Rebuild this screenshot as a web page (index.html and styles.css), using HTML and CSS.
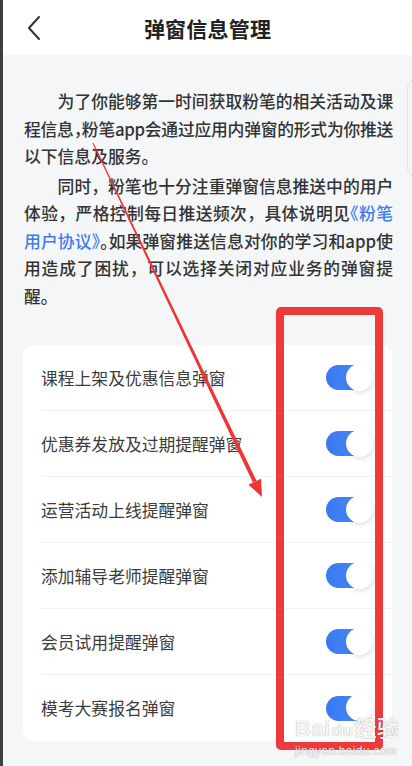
FILE: index.html
```html
<!DOCTYPE html>
<html lang="zh-CN">

<head>
    <meta charset="UTF-8">
    <meta name="viewport" content="width=device-width, initial-scale=1.0">
    <title>弹窗信息管理</title>
    <link rel="stylesheet" href="styles.css">
</head>

<body>

    <!-- Top bar -->
    <header class="topbar">
        <a class="back" href="#">
            <svg width="14" height="26" viewBox="0 0 14 26">
                <polyline points="12,2 2,13 12,24" fill="none" stroke="#333" stroke-width="2" stroke-linecap="round" stroke-linejoin="round" />
            </svg>
        </a>
        <h1>弹窗信息管理</h1>
        <span></span>
    </header>

    <!-- Intro text -->
    <section class="intro">
        <p>
            <span class="ln first">为了你能够第一时间获取粉笔的相关活动及课</span>
            <span class="ln tight">程信息<span class="half">，</span>粉笔app会通过应用内弹窗的形式为你推送</span>
            <span class="end">以下信息及服务。</span>
        </p>
        <p>
            <span class="ln first">同时，粉笔也十分注重弹窗信息推送中的用户</span>
            <span class="ln">体验，严格控制每日推送频次，具体说明见<a href="#"><span class="half">《</span>粉笔</a></span>
            <span class="ln"><a href="#">用户协议<span class="half">》</span></a><span class="half">。</span>如果弹窗推送信息对你的学习和app使</span>
            <span class="ln">用造成了困扰，可以选择关闭对应业务的弹窗提</span>
            <span class="end">醒。</span>
        </p>
    </section>

    <!-- Switch list -->
    <ul class="card">
        <li class="row"><span>课程上架及优惠信息弹窗</span><span class="switch on"><i></i></span></li>
        <li class="row"><span>优惠券发放及过期提醒弹窗</span><span class="switch on"><i></i></span></li>
        <li class="row"><span>运营活动上线提醒弹窗</span><span class="switch on"><i></i></span></li>
        <li class="row"><span>添加辅导老师提醒弹窗</span><span class="switch on"><i></i></span></li>
        <li class="row"><span>会员试用提醒弹窗</span><span class="switch on"><i></i></span></li>
        <li class="row"><span>模考大赛报名弹窗</span><span class="switch on"><i></i></span></li>
    </ul>

    <!-- Floating side tab -->
    <div class="side-tab"></div>

    <!-- Annotation: red frame and arrow -->
    <div class="mark-box"></div>
    <svg class="mark-arrow" width="412" height="766" viewBox="0 0 412 766">
        <polygon points="93.5,142.7 92.5,143.3 252.9,482.6 256.5,480.8" fill="#ee3535" />
        <polygon points="262,497 261,478.7 248.4,484.7" fill="#ee3535" />
    </svg>

    <!-- Watermark -->
    <div class="watermark">
        <div class="wm-logo">Bai<span>du</span>经验</div>
        <div class="wm-url">jingyan.baidu.com</div>
    </div>

</body>

</html>
```

FILE: styles.css
```css
/* Page */
html,
body {
    margin: 0;
    padding: 0;
}

body {
    position: relative;
    min-height: 766px;
    box-sizing: border-box;
    border-left: 3px solid #3e3e3e;
    background: #f5f6f8;
    font-family: "Noto Sans CJK SC", "Noto Sans", sans-serif;
    color: #333;
    overflow: hidden;
}

/* Top bar */
.topbar {
    height: 55px;
    background: #fff;
    display: grid;
    grid-template-columns: 60px 1fr 60px;
    align-items: center;
}

.back {
    display: flex;
    padding-left: 24px;
}

.topbar h1 {
    margin: 0;
    text-align: center;
    font-size: 21px;
    font-weight: 700;
    color: #222;
    letter-spacing: 0.2px;
}

/* Intro text */
.intro {
    padding: 33px 19px 0 21px;
}

.intro p {
    margin: 0 0 2px;
    font-size: 16.8px;
    line-height: 27.5px;
    font-weight: 500;
    color: #333;
}

.intro a {
    color: #3d7cf0;
    text-decoration: none;
}

.ln,
.end {
    display: block;
    white-space: nowrap;
}

.ln {
    text-align: justify;
    text-align-last: justify;
}

.tight {
    letter-spacing: -0.35px;
}

.first {
    text-indent: 2em;
}

.half {
    font-feature-settings: "halt";
}

/* Switch list */
.card {
    list-style: none;
    margin: 35px 20px 0;
    padding: 0;
    background: #fff;
    border-radius: 10px;
}

.row {
    height: 66px;
    margin-left: 18px;
    padding-right: 19px;
    display: flex;
    align-items: center;
    justify-content: space-between;
    font-size: 16.8px;
    color: #3c3c3c;
    border-bottom: 1px solid #f1f2f4;
    box-sizing: border-box;
}

.row:last-child {
    border-bottom: none;
}

.switch {
    position: relative;
    width: 47px;
    height: 28px;
}

.switch.on::before {
    content: "";
    position: absolute;
    left: 0;
    right: 4px;
    top: 1.5px;
    bottom: 1.5px;
    border-radius: 13px;
    background: linear-gradient(90deg, #3a78f2, #4a8cf7);
}

.switch i {
    position: absolute;
    right: 0;
    top: 0;
    width: 27px;
    height: 27px;
    border-radius: 50%;
    background: #fff;
    box-shadow: 1px 2px 4px rgba(0, 0, 0, 0.12);
}

/* Floating side tab */
.side-tab {
    position: absolute;
    left: 404px;
    top: 78px;
    width: 12px;
    height: 98px;
    background: #f3f4f6;
    border: 1px solid #e2e3e6;
    border-radius: 10px 0 0 10px;
}

/* Annotation */
.mark-box {
    position: absolute;
    left: 273px;
    top: 307px;
    width: 107px;
    height: 443px;
    box-sizing: border-box;
    border: 8px solid #ef3a3b;
    border-radius: 5px;
}

.mark-arrow {
    position: absolute;
    left: -3px;
    top: 0;
    pointer-events: none;
}

/* Watermark */
.watermark {
    position: absolute;
    left: 292px;
    top: 716px;
    color: rgba(255, 255, 255, 0.92);
    text-shadow: 0 0 1px rgba(0, 0, 0, 0.45);
    font-family: "Liberation Sans", "Noto Sans CJK SC", sans-serif;
}

.wm-logo {
    font-size: 22px;
    font-weight: 700;
    line-height: 26px;
    letter-spacing: 0.5px;
}

.wm-logo span {
    font-size: 17px;
    margin: 0 1px;
}

.wm-url {
    font-size: 12px;
    line-height: 14px;
    letter-spacing: 0.3px;
}
```
